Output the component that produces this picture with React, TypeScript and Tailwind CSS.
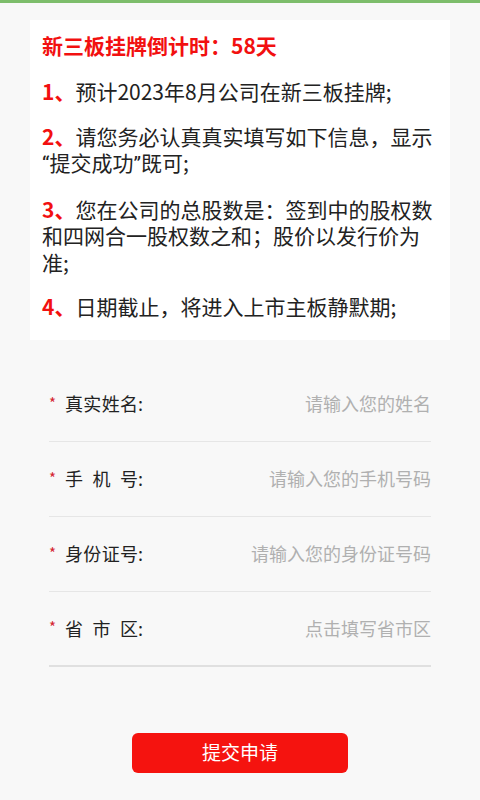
import React from 'react';

const Q: React.FC<{ children: React.ReactNode }> = ({ children }) => (
  <span className="font-['Roboto']">{children}</span>
);

const notes: { n: string; text: React.ReactNode }[] = [
  { n: '1', text: '预计2023年8月公司在新三板挂牌;' },
  {
    n: '2',
    text: (
      <>
        请您务必认真真实填写如下信息，显示<wbr />
        <Q>“</Q>提交成功<Q>”</Q>既可;
      </>
    ),
  },
  { n: '3', text: '您在公司的总股数是：签到中的股权数和四网合一股权数之和；股价以发行价为准;' },
  { n: '4', text: '日期截止，将进入上市主板静默期;' },
];

const fields = [
  { label: ['真', '实', '姓', '名'], placeholder: '请输入您的姓名' },
  { label: ['手', '机', '号'], placeholder: '请输入您的手机号码' },
  { label: ['身', '份', '证', '号'], placeholder: '请输入您的身份证号码' },
  { label: ['省', '市', '区'], placeholder: '点击填写省市区' },
];

const App: React.FC = () => {
  return (
    <div
      className="min-h-[800px] bg-[#f8f8f8] border-t-[3px] border-[#7dbd6b]"
      style={{ fontFamily: "'Noto Sans CJK SC', 'Noto Sans', sans-serif" }}
    >
      {/* Notice card */}
      <div className="mx-[30px] mt-[17px] bg-white pl-3 pr-[10px] pt-[12px] pb-[20px]">
        <h1 className="text-[21px] leading-[26px] font-bold text-[#f21010]">新三板挂牌倒计时：58天</h1>
        <div className="mt-[20px] flex flex-col gap-[18px]">
          {notes.map(item => (
            <p key={item.n} className="text-[21px] leading-[26.5px] text-[#222]">
              <span className="font-bold text-[#f21010]">{item.n}、</span>
              {item.text}
            </p>
          ))}
        </div>
      </div>

      {/* Form */}
      <div className="mx-[49px] mt-[27px]">
        {fields.map((f, i) => (
          <div
            key={f.placeholder}
            className={`flex items-center justify-between h-[75px] ${i === fields.length - 1 ? 'border-b-2 border-[#e0e0e0]' : 'border-b border-[#e6e6e6]'}`}
          >
            <div className="flex items-center text-[18px] text-[#222]">
              <span className="text-[15px] text-[#d42530] w-[16px] leading-none pb-[3px]">*</span>
              <span className="flex justify-between w-[73px]">
                {f.label.map((c, j) => (
                  <span key={j}>{c}</span>
                ))}
              </span>
              <span>:</span>
            </div>
            <span className="text-[18px] text-[#b0b0b0]">{f.placeholder}</span>
          </div>
        ))}
      </div>

      <div className="flex justify-center mt-[66px]">
        <button className="w-[216px] h-[40px] rounded-[6px] bg-[#f5130f] text-white text-[19px]">提交申请</button>
      </div>
    </div>
  );
};

export default App;
